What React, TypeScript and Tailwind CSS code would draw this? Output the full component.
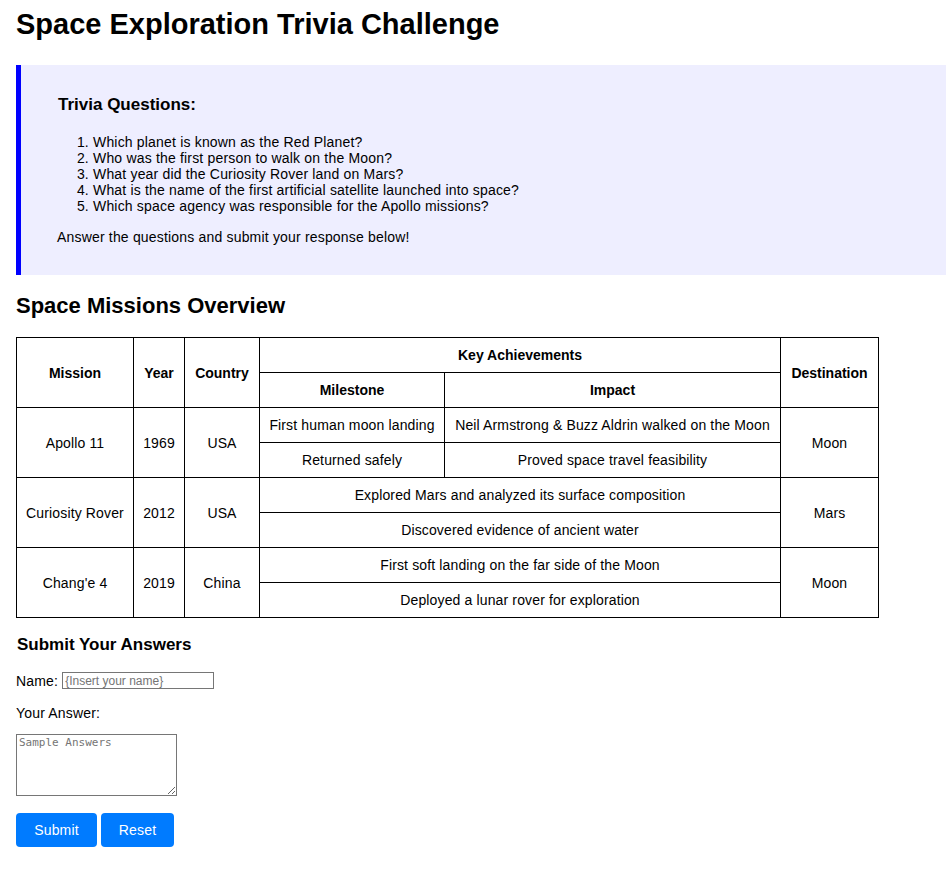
export default function App() {
  const questions = [
    "Which planet is known as the Red Planet?",
    "Who was the first person to walk on the Moon?",
    "What year did the Curiosity Rover land on Mars?",
    "What is the name of the first artificial satellite launched into space?",
    "Which space agency was responsible for the Apollo missions?",
  ];

  const cell = "border border-black px-[9px] py-[9px] text-center whitespace-nowrap";
  const td = cell + " tracking-[0.14px]";

  return (
    <div className="pl-4 pt-[7px] pb-6 text-[14px] leading-[16px] text-black font-['Liberation_Sans',Arial,sans-serif]">
      <h1 className="text-[29px] leading-[34px] font-bold mb-[24px]">
        Space Exploration Trivia Challenge
      </h1>

      <div className="bg-[#eeeeff] border-l-[5px] border-[#0000ff] pl-9 pt-[30px] pb-[30px] tracking-[0.18px]">
        <h3 className="text-[17px] leading-[20px] font-bold ml-[1px] tracking-normal">Trivia Questions:</h3>
        <ol className="list-decimal pl-9 mt-[19px]">
          {questions.map((q) => (
            <li key={q}>{q}</li>
          ))}
        </ol>
        <p className="mt-[15px]">Answer the questions and submit your response below!</p>
      </div>

      <h2 className="text-[22px] leading-[25px] font-bold mt-[18px] mb-[19px]">
        Space Missions Overview
      </h2>

      <table className="border-collapse">
        <thead>
          <tr>
            <th rowSpan={2} className={cell + " w-[117px]"}>Mission</th>
            <th rowSpan={2} className={cell + " w-[51px]"}>Year</th>
            <th rowSpan={2} className={cell + " w-[75px]"}>Country</th>
            <th colSpan={2} className={cell}>Key Achievements</th>
            <th rowSpan={2} className={cell + " w-[98px]"}>Destination</th>
          </tr>
          <tr>
            <th className={cell + " w-[185px]"}>Milestone</th>
            <th className={cell + " w-[336px]"}>Impact</th>
          </tr>
        </thead>
        <tbody>
          <tr>
            <td rowSpan={2} className={td}>Apollo 11</td>
            <td rowSpan={2} className={td}>1969</td>
            <td rowSpan={2} className={td}>USA</td>
            <td className={td}>First human moon landing</td>
            <td className={td}>Neil Armstrong &amp; Buzz Aldrin walked on the Moon</td>
            <td rowSpan={2} className={td}>Moon</td>
          </tr>
          <tr>
            <td className={td}>Returned safely</td>
            <td className={td}>Proved space travel feasibility</td>
          </tr>
          <tr>
            <td rowSpan={2} className={td}>Curiosity Rover</td>
            <td rowSpan={2} className={td}>2012</td>
            <td rowSpan={2} className={td}>USA</td>
            <td colSpan={2} className={td}>Explored Mars and analyzed its surface composition</td>
            <td rowSpan={2} className={td}>Mars</td>
          </tr>
          <tr>
            <td colSpan={2} className={td}>Discovered evidence of ancient water</td>
          </tr>
          <tr>
            <td rowSpan={2} className={td}>Chang'e 4</td>
            <td rowSpan={2} className={td}>2019</td>
            <td rowSpan={2} className={td}>China</td>
            <td colSpan={2} className={td}>First soft landing on the far side of the Moon</td>
            <td rowSpan={2} className={td}>Moon</td>
          </tr>
          <tr>
            <td colSpan={2} className={td}>Deployed a lunar rover for exploration</td>
          </tr>
        </tbody>
      </table>

      <h3 className="text-[17px] leading-[20px] font-bold mt-[17px] ml-[1px]">Submit Your Answers</h3>
      <form className="mt-[17px] tracking-[0.18px]">
        <div className="flex items-center">
          <label htmlFor="name">Name:</label>
          <input
            id="name"
            type="text"
            placeholder="{Insert your name}"
            className="ml-[4px] w-[152px] h-[17px] border border-[#767676] px-[2px] text-[12px] leading-[14px] tracking-normal placeholder:text-[#757575] font-['Liberation_Sans',Arial,sans-serif]"
          />
        </div>
        <p className="mt-[16px]">Your Answer:</p>
        <textarea
          placeholder="Sample Answers"
          className="block mt-[13px] w-[161px] h-[62px] border border-[#767676] px-[2px] py-[1px] text-[11px] leading-[14px] tracking-normal placeholder:text-[#757575] font-['DejaVu_Sans_Mono',monospace]"
        />
        <div className="flex gap-1 mt-[17px]">
          <button type="button" className="bg-[#007bff] text-white rounded-[4px] h-[34px] w-[81px] text-[14px]">
            Submit
          </button>
          <button type="button" className="bg-[#007bff] text-white rounded-[4px] h-[34px] w-[73px] text-[14px]">
            Reset
          </button>
        </div>
      </form>
    </div>
  );
}
